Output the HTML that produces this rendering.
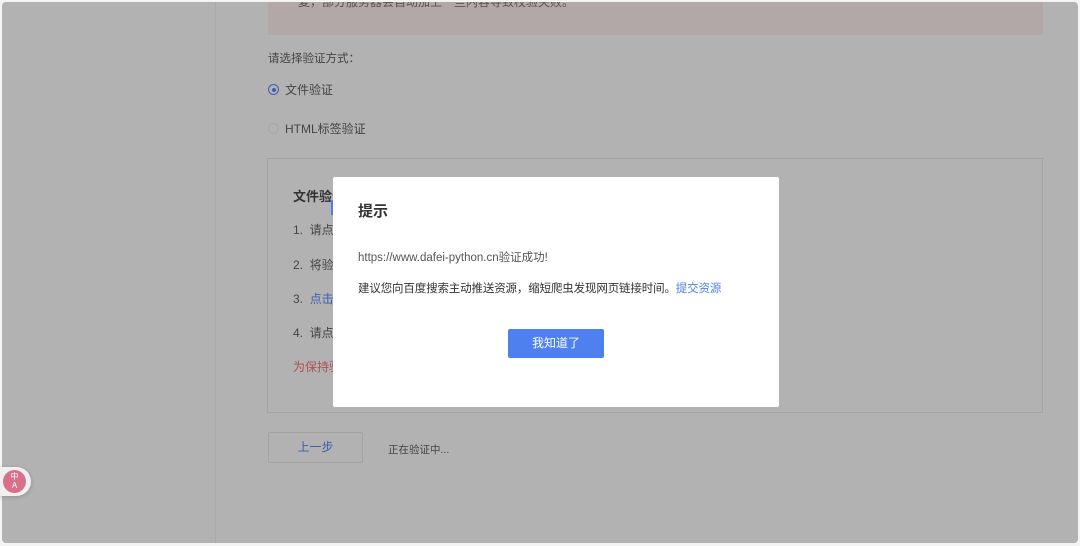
<!DOCTYPE html>
<html><head><meta charset="utf-8"><style>
*{margin:0;padding:0;box-sizing:border-box}
html,body{width:1080px;height:546px;overflow:hidden;background:#f4f4f4;font-family:"Liberation Sans","Noto Sans CJK SC",sans-serif}
.page{position:absolute;left:2px;top:2px;width:1076px;height:541px;background:#b2b2b2;border-radius:4px;overflow:hidden}
.in{position:absolute;left:-2px;top:-2px;width:1080px;height:546px}
.abs{position:absolute;white-space:nowrap}
.side{position:absolute;left:215px;top:0;width:1px;height:546px;background:#a9a9a9}
.warn{position:absolute;left:268px;top:0;width:775px;height:35px;background:#b3a8a8}
.t{font-size:12px;color:#444}
.radio{position:absolute;width:11px;height:11px;border-radius:50%;border:1px solid #a6a6a6}
.box{position:absolute;left:267px;top:158px;width:776px;height:255px;border:1px solid #a3a3a3}
.modal{position:absolute;left:333px;top:177px;width:446px;height:230px;background:#fff;border-radius:2px}
.btn{position:absolute;left:175px;top:152px;width:96px;height:29px;background:#4e80f0;border-radius:2px;color:#fff;font-size:12px;text-align:center;line-height:29px}
</style></head><body>
<div class="page"><div class="in">
<div class="side"></div>
<div class="warn"><span class="abs t" style="left:30px;top:-7px;color:#5a5252">复，部分服务器会自动加上一些内容导致校验失败。</span></div>
<div class="abs t" style="left:268px;top:50px;font-size:11.5px">请选择验证方式：</div>
<div class="radio" style="left:268px;top:84px;border-color:#3d5fb0"><div style="position:absolute;left:2.5px;top:2.5px;width:4px;height:4px;border-radius:50%;background:#3d5fb0"></div></div>
<div class="abs t" style="left:285px;top:81px">文件验证</div>
<div class="radio" style="left:268px;top:123px"></div>
<div class="abs t" style="left:285px;top:120px">HTML标签验证</div>
<div class="box"></div>
<div class="abs" style="left:293px;top:186px;font-size:13px;font-weight:bold;color:#333">文件验证</div>
<div class="abs t" style="left:293px;top:221px">1.&nbsp; 请点击</div>
<div class="abs t" style="left:293px;top:256px">2.&nbsp; 将验证</div>
<div class="abs t" style="left:293px;top:290px">3.&nbsp; <span style="color:#3d5fb0">点击</span></div>
<div class="abs t" style="left:293px;top:324px">4.&nbsp; 请点击</div>
<div class="abs t" style="left:293px;top:358px;color:#b05050">为保持验证</div>
<div class="abs" style="left:331px;top:200px;width:3px;height:15px;background:#4e80f0"></div>
<div class="modal">
<div class="abs" style="left:25px;top:23px;font-size:15px;font-weight:bold;color:#333">提示</div>
<div class="abs" style="left:25px;top:72px;font-size:11.5px;color:#555">https://www.dafei-python.cn验证成功!</div>
<div class="abs" style="left:25px;top:103px;font-size:11.5px;color:#333;letter-spacing:-0.15px">建议您向百度搜索主动推送资源，缩短爬虫发现网页链接时间。<span style="color:#4e80f0">提交资源</span></div>
<div class="btn">我知道了</div>
</div>
<div class="abs" style="left:268px;top:432px;width:95px;height:31px;border:1px solid #a3a3a3;border-radius:2px;color:#3d5fb0;font-size:12px;text-align:center;line-height:29px">上一步</div>
<div class="abs" style="left:388px;top:442px;font-size:10.5px;color:#444">正在验证中...</div>
</div></div>
<div class="abs" style="left:-2px;top:467px;width:33px;height:29px;background:#f0f0f0;border-radius:0 15px 15px 0;box-shadow:0 1px 4px rgba(0,0,0,.2)"></div>
<div class="abs" style="left:3px;top:470px;width:23px;height:23px;border-radius:50%;background:#d8708a;color:#fff;font-size:8px;line-height:9px;text-align:center;padding-top:2px">中<br>A</div>
</body></html>
